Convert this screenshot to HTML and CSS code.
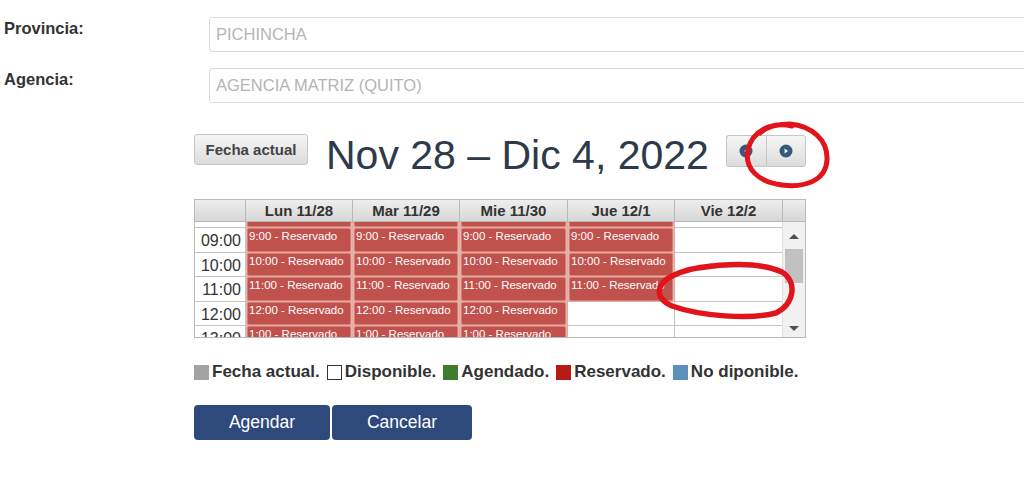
FILE: index.html
```html
<!DOCTYPE html>
<html lang="es">
<head>
<meta charset="utf-8">
<title>Agendar cita</title>
<link rel="stylesheet" href="styles.css">
</head>
<body>
<div class="page">
  <div class="form-row">
    <label class="form-label">Provincia:</label>
    <div class="form-input">PICHINCHA</div>
  </div>
  <div class="form-row">
    <label class="form-label">Agencia:</label>
    <div class="form-input">AGENCIA MATRIZ (QUITO)</div>
  </div>

  <div class="section">
    <div class="toolbar">
      <button class="btn-today">Fecha actual</button>
      <h2 class="title">Nov 28 – Dic 4, 2022</h2>
      <div class="nav">
        <button class="nav-btn"><svg width="14" height="14" viewBox="0 0 14 14"><circle cx="7" cy="7" r="6.5" fill="#34597d"/><path d="M8.6 4.4 L5.2 7 L8.6 9.6 Z" fill="#fff"/></svg></button>
        <button class="nav-btn"><svg width="14" height="14" viewBox="0 0 14 14"><circle cx="7" cy="7" r="6.5" fill="#34597d"/><path d="M5.6 4.4 L9 7 L5.6 9.6 Z" fill="#fff"/></svg></button>
      </div>
    </div>

    <div class="cal">
      <div class="cal-head">
        <div class="hcell"></div>
        <div class="hcell">Lun 11/28</div>
        <div class="hcell">Mar 11/29</div>
        <div class="hcell">Mie 11/30</div>
        <div class="hcell">Jue 12/1</div>
        <div class="hcell">Vie 12/2</div>
        <div class="hcell hscroll"></div>
      </div>
      <div class="cal-body">
        <div class="cal-view">
          <div class="cal-grid">
            <div class="tcell"></div>
            <div class="dcell"><div class="ev"></div></div>
            <div class="dcell"><div class="ev"></div></div>
            <div class="dcell"><div class="ev"></div></div>
            <div class="dcell"><div class="ev"></div></div>
            <div class="dcell"></div>

            <div class="tcell">09:00</div>
            <div class="dcell"><div class="ev">9:00 - Reservado</div></div>
            <div class="dcell"><div class="ev">9:00 - Reservado</div></div>
            <div class="dcell"><div class="ev">9:00 - Reservado</div></div>
            <div class="dcell"><div class="ev">9:00 - Reservado</div></div>
            <div class="dcell"></div>

            <div class="tcell">10:00</div>
            <div class="dcell"><div class="ev">10:00 - Reservado</div></div>
            <div class="dcell"><div class="ev">10:00 - Reservado</div></div>
            <div class="dcell"><div class="ev">10:00 - Reservado</div></div>
            <div class="dcell"><div class="ev">10:00 - Reservado</div></div>
            <div class="dcell"></div>

            <div class="tcell">11:00</div>
            <div class="dcell"><div class="ev">11:00 - Reservado</div></div>
            <div class="dcell"><div class="ev">11:00 - Reservado</div></div>
            <div class="dcell"><div class="ev">11:00 - Reservado</div></div>
            <div class="dcell"><div class="ev">11:00 - Reservado</div></div>
            <div class="dcell"></div>

            <div class="tcell">12:00</div>
            <div class="dcell"><div class="ev">12:00 - Reservado</div></div>
            <div class="dcell"><div class="ev">12:00 - Reservado</div></div>
            <div class="dcell"><div class="ev">12:00 - Reservado</div></div>
            <div class="dcell"></div>
            <div class="dcell"></div>

            <div class="tcell">13:00</div>
            <div class="dcell"><div class="ev">1:00 - Reservado</div></div>
            <div class="dcell"><div class="ev">1:00 - Reservado</div></div>
            <div class="dcell"><div class="ev">1:00 - Reservado</div></div>
            <div class="dcell"></div>
            <div class="dcell"></div>
          </div>
        </div>
        <div class="scrollbar">
          <div class="arrow up"></div>
          <div class="track"><div class="thumb"></div></div>
          <div class="arrow down"></div>
        </div>
      </div>
    </div>

    <div class="legend">
      <span class="sw sw-gray"></span><span class="lg">Fecha actual.</span>
      <span class="sw sw-white"></span><span class="lg">Disponible.</span>
      <span class="sw sw-green"></span><span class="lg">Agendado.</span>
      <span class="sw sw-red"></span><span class="lg">Reservado.</span>
      <span class="sw sw-blue"></span><span class="lg">No diponible.</span>
    </div>

    <div class="actions">
      <button class="btn-primary btn-agendar">Agendar</button>
      <button class="btn-primary btn-cancelar">Cancelar</button>
    </div>
  </div>
</div>

<svg class="marks" width="1024" height="495" viewBox="0 0 1024 495">
  <path d="M792 126 C772 121 752 131 748 150 C744 168 758 182 782 185 C806 188 826 180 827 160 C828 140 812 126 790 124 C778 124 766 127 760 133" fill="none" stroke="#e0141a" stroke-width="5" stroke-linecap="round"/>
  <path d="M698 268 C725 264 760 262 782 272 C798 282 794 304 776 313 C750 320 700 316 672 306 C654 298 656 284 672 276 C684 270 700 267 712 266" fill="none" stroke="#e0141a" stroke-width="5.5" stroke-linecap="round"/>
</svg>
</body>
</html>
```

FILE: styles.css
```css
html, body {
  margin: 0;
  padding: 0;
  background: #fff;
  overflow: hidden;
}

body {
  width: 1024px;
  height: 495px;
  position: relative;
  font-family: "Liberation Sans", Arial, sans-serif;
  color: #333;
}

.page {
  padding: 17px 0 0 4px;
}

.form-row {
  display: flex;
  align-items: flex-start;
  height: 35px;
  margin-bottom: 16px;
}

.form-label {
  width: 205px;
  flex: none;
  font-weight: bold;
  font-size: 16.5px;
  padding-top: 2px;
  color: #333;
}

.form-input {
  flex: none;
  width: 840px;
  height: 35px;
  box-sizing: border-box;
  border: 1px solid #dcdcdc;
  border-radius: 3px;
  padding: 0 6px;
  line-height: 33px;
  font-size: 16.5px;
  color: #b4b4b4;
  background: #fff;
}

.section {
  padding: 13px 0 0 190px;
}

.toolbar {
  display: flex;
  align-items: flex-start;
}

.btn-today {
  margin-top: 2px;
  width: 114px;
  height: 31px;
  border: 1px solid #c6c6c6;
  border-radius: 3px;
  background: linear-gradient(#f6f6f6, #dcdcdc);
  font-family: "Liberation Sans", Arial, sans-serif;
  font-weight: bold;
  font-size: 15px;
  color: #444;
  padding: 0;
}

.title {
  margin: 0 0 0 18px;
  font-weight: normal;
  font-size: 41px;
  line-height: 46px;
  color: #2c3a4c;
  white-space: nowrap;
}

.nav {
  display: flex;
  margin: 3px 0 0 17px;
}

.nav-btn {
  width: 40px;
  height: 32px;
  border: 1px solid #c6c6c6;
  background: linear-gradient(#f6f6f6, #dcdcdc);
  padding: 0;
  display: flex;
  align-items: center;
  justify-content: center;
}

.nav-btn:first-child {
  border-radius: 3px 0 0 3px;
  border-right: none;
}

.nav-btn:last-child {
  border-radius: 0 3px 3px 0;
}

.cal {
  width: 612px;
  margin-top: 21px;
  border: 1px solid #b9b9b9;
  box-sizing: border-box;
}

.cal-head {
  display: grid;
  grid-template-columns: 51px 107px 107px 108px 107px 108px 1fr;
  height: 22px;
  background: linear-gradient(#eeeeee, #d6d6d6);
}

.hcell {
  border-right: 1px solid #b9b9b9;
  border-bottom: 1px solid #b9b9b9;
  font-weight: bold;
  font-size: 15px;
  text-align: center;
  line-height: 21px;
  color: #333;
  white-space: nowrap;
}

.hcell.hscroll {
  border-right: none;
}

.cal-body {
  display: flex;
  height: 115px;
}

.cal-view {
  width: 587px;
  overflow: hidden;
}

.cal-grid {
  display: grid;
  grid-template-columns: 51px 107px 107px 108px 107px 108px;
  grid-auto-rows: 24.5px;
  margin-top: -18.5px;
}

.tcell {
  border-right: 1px solid #c4c4c4;
  border-bottom: 1px solid #c4c4c4;
  font-size: 16px;
  text-align: right;
  padding-right: 4px;
  line-height: 26px;
  color: #333;
}

.dcell {
  border-right: 1px solid #c4c4c4;
  border-bottom: 1px solid #c4c4c4;
  background: #fff;
  position: relative;
}

.dcell:has(.ev) {
  background: #e7b4ac;
  border-color: #e2aca4;
}

.ev {
  height: 100%;
  box-sizing: border-box;
  margin: 0 1px;
  background: #c1514d;
  border: 1px solid #d67d74;
  border-radius: 2px;
  color: #fff;
  font-size: 11.5px;
  line-height: 15px;
  padding: 0 1px;
  white-space: nowrap;
  overflow: hidden;
}

.scrollbar {
  flex: 1;
  display: flex;
  flex-direction: column;
  background: #f1f1f1;
  border-left: 1px solid #e2e2e2;
}

.arrow {
  height: 18px;
  display: flex;
  align-items: center;
  justify-content: center;
}

.arrow.up {
  margin-top: 5px;
}

.arrow.up::before {
  content: "";
  border-left: 5px solid transparent;
  border-right: 5px solid transparent;
  border-bottom: 5px solid #505050;
}

.arrow.down::before {
  content: "";
  border-left: 5px solid transparent;
  border-right: 5px solid transparent;
  border-top: 5px solid #505050;
}

.track {
  flex: 1;
  padding: 4px 2px 0;
}

.thumb {
  height: 34px;
  background: #c1c1c1;
}

.legend {
  display: flex;
  align-items: center;
  margin-top: 24px;
  font-weight: bold;
  font-size: 17px;
  color: #333;
}

.sw {
  width: 15px;
  height: 15px;
  box-sizing: border-box;
  margin-right: 3px;
  flex: none;
}

.lg {
  margin-right: 7px;
}

.sw-gray { background: #a3a3a3; }
.sw-white { background: #fff; border: 1px solid #333; }
.sw-green { background: #3f7d2c; }
.sw-red { background: #b71b16; }
.sw-blue { background: #5d8fbd; }

.actions {
  display: flex;
  gap: 2px;
  margin-top: 23px;
}

.btn-primary {
  height: 35px;
  border: none;
  border-radius: 4px;
  background: #2e4a7c;
  color: #fff;
  font-family: "Liberation Sans", Arial, sans-serif;
  font-size: 17.5px;
  padding: 0;
}

.btn-agendar { width: 136px; }
.btn-cancelar { width: 140px; }

.marks {
  position: absolute;
  top: 0;
  left: 0;
  pointer-events: none;
}
```
